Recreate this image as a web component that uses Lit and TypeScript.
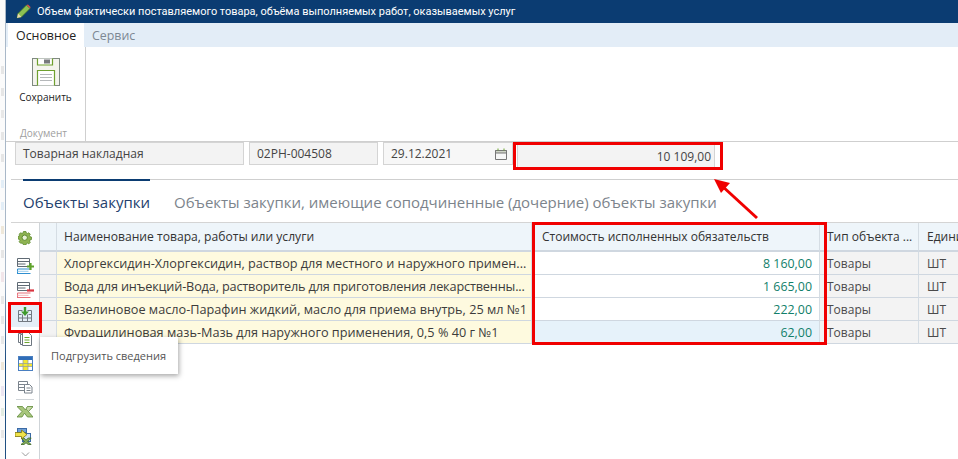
import { LitElement, html, css, svg } from 'lit';
import { customElement } from 'lit/decorators.js';
import { classMap } from 'lit/directives/class-map.js';

const rows = [
  { name: 'Хлоргексидин-Хлоргексидин, раствор для местного и наружного примен...', cost: '8 160,00' },
  { name: 'Вода для инъекций-Вода, растворитель для приготовления лекарственны...', cost: '1 665,00', tight: true },
  { name: 'Вазелиновое масло-Парафин жидкий, масло для приема внутрь, 25 мл №1', cost: '222,00' },
  { name: 'Фурацилиновая мазь-Мазь для наружного применения, 0,5 % 40 г №1', cost: '62,00', selected: true },
];

// pale smudges of the page behind the window
const smudges = [
  { y: 66, h: 8, c: '#e6e6e6' },
  { y: 88, h: 8, c: '#e6e6e6' },
  { y: 110, h: 8, c: '#e8e8e8' },
  { y: 132, h: 8, c: '#e6e6e6' },
  { y: 154, h: 8, c: '#e6e6e6' },
  { y: 180, h: 8, c: '#e3eef7' },
  { y: 202, h: 8, c: '#e3eef7' },
  { y: 226, h: 8, c: '#efe8da' },
  { y: 250, h: 8, c: '#e6e6e6' },
  { y: 272, h: 10, c: '#f2e6ea' },
  { y: 296, h: 8, c: '#e8e8e8' },
  { y: 316, h: 8, c: '#e8e8e8' },
  { y: 336, h: 8, c: '#e8e8e8' },
  { y: 362, h: 8, c: '#efe8da' },
  { y: 386, h: 10, c: '#ece6f2' },
  { y: 408, h: 8, c: '#e3ece3' },
  { y: 430, h: 8, c: '#e8e8e8' },
];

const icons = {
  save: svg`<rect x=".5" y=".5" width="27" height="27" fill="#f4f4ee" stroke="#7f8a80"/>
    <path d="M5.500 .5v6.500h15V.5M5.500 27.500V12.500h17v15" fill="#fff" stroke="#6ea02e" stroke-width="1.200"/>
    <rect x="12" y="1.500" width="6" height="4" fill="#77797c"/>
    <path d="M8 16.500h12M8 19.500h12M8 22.500h12" stroke="#b5b8ba"/>`,
  gear: svg`<path d="M8 0h4l.6 2.400 1.800.8L16.600 2l2.400 2.400-1.300 2.200.8 1.800 2.400.6v4l-2.400.6-.8 1.800 1.300 2.200-2.400 2.400-2.200-1.300-1.800.8-.6 2.400H8l-.6-2.400-1.800-.8L3.400 19 1 16.600l1.300-2.200-.8-1.800L-1 12V8l2.400-.6.8-1.800L1 4.400 3.400 2l2.200 1.200 1.800-.8z" transform="translate(.5 .5) scale(.62)" fill="#8fb352" stroke="#5c8a2c" stroke-width="1.300"/>
    <circle cx="6.700" cy="6.700" r="2.700" fill="#e9f1d8" stroke="#5c8a2c"/>`,
  add: svg`<path d="M.5 .5h12v8h-12zM.5 3.500h12" fill="#fff" stroke="#5f6a74"/>
    <path d="M.5 6h8" stroke="#5f6a74"/>
    <path d="M.5 11h13M.5 11v4.500h13" fill="none" stroke="#2f8fd0" stroke-width="1.100"/>
    <path d="M.5 13.300h11" stroke="#9cccec"/>
    <path d="M10 8.500h7M13.500 5v7" stroke="#5fa32c" stroke-width="2.200"/>`,
  remove: svg`<path d="M.5 .5h12v8h-12zM.5 3.500h12" fill="#fff" stroke="#5f6a74"/>
    <path d="M.5 6h8" stroke="#5f6a74"/>
    <path d="M.5 11h13M.5 11v4.500h13" fill="none" stroke="#e8707a" stroke-width="1.100"/>
    <path d="M.5 13.300h11" stroke="#f3b7bb"/>
    <path d="M10 8.500h7" stroke="#d8333f" stroke-width="2.200"/>`,
  load: svg`<path d="M4.500 3.500h-4v11h13v-11h-4M.5 7.500h3M10.500 7.500h3M.5 11h13M4.500 7.500v7M9.500 7.500v7" fill="none" stroke="#727a82"/>
    <path d="M5.800 0h2.400v4.500H11L7 9 3 4.500h2.800z" fill="#3f9a2e"/>`,
  copy: svg`<path d="M3.500 1.500h-3v9h3" fill="none" stroke="#6d7680"/>
    <path d="M5.500 2.500H2.500v10h3" fill="#fff" stroke="#6d7680"/>
    <path d="M4.500 .5h6l3 3v10h-9z" fill="#fff" stroke="#6d7680"/>
    <path d="M6.500 5.500h5M6.500 8h5M6.500 10.500h5" stroke="#6da52e" stroke-width="1.200"/>`,
  table: svg`<rect x=".5" y=".5" width="14" height="14" fill="#fff" stroke="#4a7fc0"/>
    <rect x="1" y="1" width="13" height="3" fill="#2f6db8"/>
    <rect x="5" y="4" width="5" height="10" fill="#f5e830"/>
    <rect x="1" y="7.500" width="13" height="3" fill="#f5e830"/>
    <path d="M5 4v10M10 4v10M1 7.500h13M1 10.500h13" stroke="#8c9aa8" stroke-width=".7"/>`,
  copyLines: svg`<path d="M.5 .5h9v9h-9z" fill="#fff" stroke="#7a838c"/>
    <path d="M.5 3.500h8M.5 6.500h6" stroke="#7a838c"/>
    <path d="M7.500 3.500h4l2.500 2.500v6H6.500v-8.500z" fill="#fff" stroke="#7a838c"/>
    <path d="M8.500 7h4M8.500 9.500h4" stroke="#7a838c"/>`,
  excel: svg`<path d="M0 .5h5.500l3 3.500 2-3.500H16l-4.500 5 4.500 5.500h-5.500l-3-3.800-2.500 3.800H0l5-5.500z" fill="#a8c67c" stroke="#5f8a3a" stroke-width=".8"/>
    <path d="M10.500 .5H16l-4.500 5L9 3z" fill="#c9dca9" stroke="#5f8a3a" stroke-width=".6"/>`,
  exportTo: svg`<rect x="2.500" y=".5" width="9" height="4" fill="#6f9fd8" stroke="#3b6aa5"/>
    <rect x="7.500" y="5.500" width="8" height="8" fill="#cfe0f2" stroke="#3b6aa5"/>
    <path d="M6 10h3l2 2.200 2.200-2.200h3l-3.500 3.500 3.500 3h-3L11 14.800l-2 1.700H6l3.500-3z" fill="#83a95a" stroke="#3e6a25" stroke-width=".8"/>
    <path d="M0 4.500h6.500V2L12 6.500 6.500 11V8.500H0z" fill="#efe24a" stroke="#7c7412" stroke-width=".8"/>`,
};

@customElement('app-root')
export class AppRoot extends LitElement {
  static styles = css`
    :host {
      display: block;
      position: relative;
      width: 958px;
      height: 459px;
      overflow: hidden;
      background: #fff;
      font-family: 'Open Sans', 'Liberation Sans', sans-serif;
      font-size: 12px;
      color: #333;
    }

    .page {
      display: flex;
      height: 100%;
    }

    .strip {
      width: 5px;
      flex: none;
      background: #fbfbfb;
    }

    .strip svg {
      display: block;
    }

    .window {
      flex: 1;
      min-width: 0;
      display: flex;
      flex-direction: column;
      border-left: 1px solid;
      border-image: linear-gradient(#a9b8c8 60%, #1f4f82 78%) 1;
    }

    .title {
      height: 23px;
      flex: none;
      display: flex;
      align-items: center;
      gap: 6px;
      padding-left: 10px;
      background: #0b3c72;
      color: #fff;
      white-space: nowrap;
      font-family: Roboto, 'Open Sans', sans-serif;
      font-size: 10.970px;
    }

    .menu {
      height: 24px;
      flex: none;
      display: flex;
      padding-left: 2px;
      background: #e3edf7;
      font-size: 12.400px;
    }

    .menu span {
      display: flex;
      align-items: center;
      padding: 0 8px;
      color: #7d8894;
    }

    .menu .on {
      background: #fff;
      color: #222;
      width: 76px;
      box-sizing: border-box;
    }

    .ribbon {
      height: 95px;
      flex: none;
      box-sizing: border-box;
      border-bottom: 1px solid #cfcfcf;
      display: flex;
    }

    .group {
      width: 80px;
      box-sizing: border-box;
      border-right: 1px solid #cfcfcf;
      display: flex;
      flex-direction: column;
      align-items: center;
      padding-top: 11px;
    }

    .group svg {
      display: block;
    }

    .save-label {
      margin-top: 4px;
      font-size: 10px;
      color: #222;
    }

    .caption {
      margin-top: auto;
      align-self: flex-start;
      padding: 0 0 1px 14px;
      font-size: 10px;
      color: #a0a0a0;
    }

    .form {
      display: flex;
      gap: 5px;
      padding-left: 9px;
      height: 24px;
      flex: none;
    }

    .field {
      box-sizing: border-box;
      height: 23px;
      display: flex;
      align-items: center;
      justify-content: space-between;
      padding: 0 7px;
      background: #f3f3f3;
      border: 1px solid #d4d4d4;
      color: #444;
      white-space: nowrap;
    }

    .doc-type { width: 229px; }
    .doc-num { width: 129px; }
    .doc-date { width: 130px; padding-right: 5px; background: #f7f7f7; }

    .doc-sum {
      width: 198px;
      height: 24px;
      margin: 2px 0 0 -1px;
      padding-right: 3px;
      justify-content: flex-end;
    }

    .tabs {
      flex: none;
      margin: 13px 0 0 5px;
      height: 42px;
      border-top: 1px solid #cfcfcf;
      display: flex;
      gap: 24px;
      padding-left: 12px;
      font-size: 15px;
    }

    .tabs span {
      display: block;
      margin-top: -1px;
      padding-top: 11px;
      color: #7c848c;
      white-space: nowrap;
      border-top: 2px solid transparent;
    }

    .tabs .on {
      color: #23416d;
      border-top-color: #0b3c72;
    }

    .body {
      flex: 1;
      min-height: 0;
      display: flex;
      margin-left: 5px;
      border-top: 1px solid #d4d4d4;
    }

    .tools {
      width: 28px;
      flex: none;
      border-right: 1px solid #cfd4d8;
      display: flex;
      flex-direction: column;
      align-items: center;
      padding-top: 3px;
    }

    .tool {
      height: 24.200px;
      flex: none;
      width: 28px;
      display: flex;
      align-items: center;
      justify-content: center;
    }

    .tool.gear {
      margin-bottom: 4px;
    }

    .tool.hover {
      background: #e4eef7;
    }

    .tool.export {
      padding-right: 4px;
      box-sizing: border-box;
    }

    .tool-sep {
      width: 18px;
      height: 1px;
      flex: none;
      background: #cfd4d8;
    }

    .more {
      margin-top: 3px;
    }

    .grid {
      flex: 1;
      min-width: 0;
      overflow: hidden;
    }

    .row {
      display: grid;
      grid-template-columns: 17px 475px 288px 99px 60px;
      height: 23px;
    }

    .row.head {
      height: 29px;
    }

    .cell {
      box-sizing: border-box;
      display: flex;
      align-items: center;
      padding-left: 7px;
      border-right: 1px solid #d5dde4;
      border-bottom: 1px solid #cfd7e0;
      white-space: nowrap;
      overflow: hidden;
      color: #4a4a4a;
    }

    .head .cell {
      background: #eef5fa;
      color: #333;
      border-bottom: 2px solid #cfd7e0;
    }

    .gutter { background: #f3f3f3; padding: 0; }
    .name { background: #fefadf; color: #3c3c3c; font-size: 12.700px; }
    .row.tight .name { letter-spacing: -.16px; }
    .head .name { font-size: 12.120px; }
    .cost { background: #fff; justify-content: flex-end; padding: 0 7px 0 0; color: #11806a; font-size: 12.400px; }
    .row.selected .cost { background: #e6f2fa; }
    .type { background: #f3f3f3; padding-left: 7px; }
    .unit { background: #f3f3f3; padding-left: 8px; border-right: 0; }
    .head .cost { justify-content: flex-start; padding-left: 10px; color: #333; font-size: 12px; }

    .mark {
      position: absolute;
      box-sizing: border-box;
      border: 3px solid #f00000;
      pointer-events: none;
    }

    .mark-sum { left: 513px; top: 142px; width: 210px; height: 28px; }
    .mark-col { left: 532px; top: 222px; width: 295px; height: 123px; }
    .mark-tool { left: 8px; top: 302px; width: 34px; height: 31px; }

    .arrow {
      position: absolute;
      left: 705px;
      top: 172px;
    }

    .tooltip {
      position: absolute;
      left: 40px;
      top: 337px;
      width: 138px;
      height: 37px;
      box-sizing: border-box;
      display: flex;
      align-items: center;
      padding-left: 11px;
      background: #fff;
      color: #555;
      font-size: 11px;
      white-space: nowrap;
      box-shadow: 1px 2px 5px rgba(0, 0, 0, .35);
    }
  `;

  private tool(icon: unknown, w: number, h: number, cls = '') {
    return html`<div class=${classMap({ tool: true, [cls]: !!cls })}>
      <svg width=${w} height=${h} viewBox="0 0 ${w} ${h}">${icon}</svg>
    </div>`;
  }

  render() {
    return html`
      <div class="page">
        <div class="strip">
          <svg width="5" height="459" viewBox="0 0 5 459">
            ${smudges.map((s) => svg`<rect x="1" y=${s.y} width="3" height=${s.h} fill=${s.c}/>`)}
          </svg>
        </div>
        <div class="window">
          <div class="title">
            <svg width="15" height="15" viewBox="0 0 15 15">
              <path d="M1 14l1-4.500L10.500 1l3.500 3.500L5.500 13z" fill="#8cc152" stroke="#3f6b22" stroke-width=".7"/>
              <path d="M10.500 1l3.500 3.500 .6-1.500-2.600-2.600z" fill="#d9534f"/>
              <path d="M1 14l1-4.500 3.500 3.500z" fill="#e8d8b0"/>
            </svg>
            Объем фактически поставляемого товара, объёма выполняемых работ, оказываемых услуг
          </div>
          <div class="menu">
            <span class="on">Основное</span>
            <span>Сервис</span>
          </div>
          <div class="ribbon">
            <div class="group">
              <svg width="28" height="28" viewBox="0 0 28 28">${icons.save}</svg>
              <div class="save-label">Сохранить</div>
              <div class="caption">Документ</div>
            </div>
          </div>
          <div class="form">
            <div class="field doc-type">Товарная накладная</div>
            <div class="field doc-num">02РН-004508</div>
            <div class="field doc-date">
              29.12.2021
              <svg width="12" height="12" viewBox="0 0 12 12">
                <path d="M.5 2.500h11v9H.5z" fill="none" stroke="#777"/>
                <path d="M.5 2.500h11v2.500H.5z" fill="#cfd4c8" stroke="#777"/>
                <path d="M3 .5v2M9 .5v2" stroke="#6da52e"/>
              </svg>
            </div>
            <div class="field doc-sum">10 109,00</div>
          </div>
          <div class="tabs">
            <span class="on">Объекты закупки</span>
            <span>Объекты закупки, имеющие соподчиненные (дочерние) объекты закупки</span>
          </div>
          <div class="body">
            <div class="tools">
              ${this.tool(icons.gear, 14, 14, 'gear')}
              ${this.tool(icons.add, 17, 16)}
              ${this.tool(icons.remove, 17, 16)}
              ${this.tool(icons.load, 14, 15, 'hover')}
              ${this.tool(icons.copy, 14, 14)}
              ${this.tool(icons.table, 15, 15)}
              ${this.tool(icons.copyLines, 15, 13)}
              <div class="tool-sep"></div>
              ${this.tool(icons.excel, 16, 12)}
              ${this.tool(icons.exportTo, 17, 17, 'export')}
              <svg class="more" width="9" height="5" viewBox="0 0 9 5">
                <path d="M1 .5l3.500 3.500L8 .5" fill="none" stroke="#9a9a9a"/>
              </svg>
            </div>
            <div class="grid">
              <div class="row head">
                <div class="cell gutter"></div>
                <div class="cell name">Наименование товара, работы или услуги</div>
                <div class="cell cost">Стоимость исполненных обязательств</div>
                <div class="cell type">Тип объекта ...</div>
                <div class="cell unit">Едини</div>
              </div>
              ${rows.map(
                (r) => html`
                  <div class=${classMap({ row: true, selected: !!r.selected, tight: !!r.tight })}>
                    <div class="cell gutter"></div>
                    <div class="cell name">${r.name}</div>
                    <div class="cell cost">${r.cost}</div>
                    <div class="cell type">Товары</div>
                    <div class="cell unit">ШТ</div>
                  </div>
                `,
              )}
            </div>
          </div>
        </div>
      </div>
      <div class="mark mark-sum"></div>
      <div class="mark mark-col"></div>
      <div class="mark mark-tool"></div>
      <svg class="arrow" width="56" height="50" viewBox="0 0 56 50">
        <path d="M52 46L16 13" stroke="#f00000" stroke-width="3" fill="none"/>
        <path d="M9 7l16 4-9 10z" fill="#f00000"/>
      </svg>
      <div class="tooltip">Подгрузить сведения</div>
    `;
  }
}
